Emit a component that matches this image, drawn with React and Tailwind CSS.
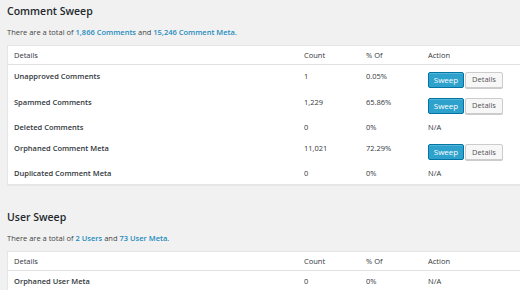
import React from "react";

const commentRows = [
  { label: "Unapproved Comments", count: "1", pct: "0.05%", action: true },
  { label: "Spammed Comments", count: "1,229", pct: "65.86%", action: true },
  { label: "Deleted Comments", count: "0", pct: "0%", action: false },
  { label: "Orphaned Comment Meta", count: "11,021", pct: "72.29%", action: true },
  { label: "Duplicated Comment Meta", count: "0", pct: "0%", action: false },
];

const userRows = [{ label: "Orphaned User Meta", count: "0", pct: "0%", action: false }];

function Row({ row }) {
  return (
    <div className={`grid grid-cols-[290px_62px_62px_1fr] ${row.action ? "pt-[6px] pb-[3px]" : "pt-[5px] pb-[4px]"}`}>
      <div className="pl-[6px] font-semibold text-[#32373c] leading-[11px]">{row.label}</div>
      <div className="pl-[6px] leading-[11px]">{row.count}</div>
      <div className="pl-[6px] leading-[11px]">{row.pct}</div>
      <div className="pl-[6px]">
        {row.action ? (
          <div className="flex gap-[1px] mt-[1px]">
            <button className="h-[16px] w-[36px] rounded-[2px] border border-[#0074a2] bg-[#2ea2cc] text-white text-[8px] leading-none shadow-[inset_0_1px_0_rgba(120,200,230,0.5)]">
              Sweep
            </button>
            <button className="h-[16px] w-[38px] rounded-[2px] border border-[#cccccc] bg-[#f7f7f7] text-[#555] text-[7.5px] leading-none shadow-[0_1px_0_#ccc]">
              Details
            </button>
          </div>
        ) : (
          <span className="leading-[11px]">N/A</span>
        )}
      </div>
    </div>
  );
}

function Section({ title, text, rows }) {
  return (
    <div>
      <h2 className="text-[10.5px] font-semibold text-[#23282d] leading-[16px]">{title}</h2>
      <p className="mt-[7px] text-[7.5px] text-[#444] leading-[12px]">{text}</p>
      <div className="mt-[7px] bg-white border border-[#e5e5e5] shadow-[0_1px_1px_rgba(0,0,0,0.04)] text-[7.5px] text-[#32373c]">
        <div className="grid grid-cols-[290px_62px_62px_1fr] py-[3px] border-b border-[#e1e1e1] text-[#32373c]">
          <div className="pl-[6px] leading-[12px]">Details</div>
          <div className="pl-[6px] leading-[12px]">Count</div>
          <div className="pl-[6px] leading-[12px]">% Of</div>
          <div className="pl-[6px] leading-[12px]">Action</div>
        </div>
        {rows.map((r) => (
          <Row key={r.label} row={r} />
        ))}
      </div>
    </div>
  );
}

const Link = ({ children }) => <span className="font-semibold text-[#1e8cbe]">{children}</span>;

export default function App() {
  return (
    <div
      className="w-[520px] h-[290px] overflow-hidden bg-[#f1f1f1] pl-[7px] pt-[3px] flex flex-col gap-[24px]"
      style={{ fontFamily: '"Open Sans", "Liberation Sans", sans-serif' }}
    >
      <div className="-mr-[20px]">
        <Section
          title="Comment Sweep"
          text={
            <>
              There are a total of <Link>1,866 Comments</Link> and <Link>15,246 Comment Meta</Link>.
            </>
          }
          rows={commentRows}
        />
      </div>
      <div className="-mr-[20px]">
        <Section
          title="User Sweep"
          text={
            <>
              There are a total of <Link>2 Users</Link> and <Link>73 User Meta</Link>.
            </>
          }
          rows={userRows}
        />
      </div>
    </div>
  );
}
